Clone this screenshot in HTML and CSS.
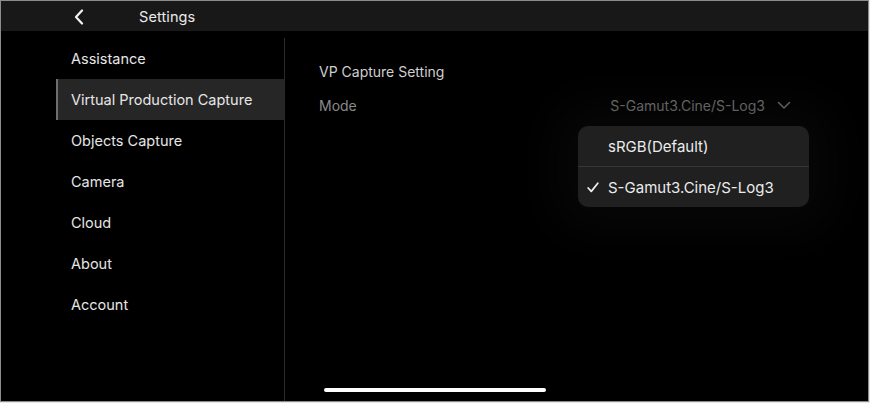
FILE: index.html
```html
<!DOCTYPE html>
<html>
<head>
<meta charset="utf-8">
<link rel="stylesheet" href="styles.css">
</head>
<body>
<div class="frame">
  <header class="topbar">
    <svg class="back" width="12" height="16" viewBox="0 0 12 16"><path d="M9 1.5 L3 8 L9 14.5" fill="none" stroke="#f2f2f2" stroke-width="2.2" stroke-linecap="round" stroke-linejoin="round"/></svg>
    <span class="title">Settings</span>
  </header>
  <div class="main">
    <nav class="sidebar">
      <div class="item">Assistance</div>
      <div class="item active">Virtual Production Capture</div>
      <div class="item">Objects Capture</div>
      <div class="item">Camera</div>
      <div class="item">Cloud</div>
      <div class="item">About</div>
      <div class="item">Account</div>
    </nav>
    <section class="content">
      <div class="section-title">VP Capture Setting</div>
      <div class="row">
        <span class="label">Mode</span>
        <span class="value">S-Gamut3.Cine/S-Log3
          <svg class="chev" width="14" height="9" viewBox="0 0 14 9"><path d="M1.5 1.5 L7 7 L12.5 1.5" fill="none" stroke="#7a7a7a" stroke-width="1.5" stroke-linecap="round" stroke-linejoin="round"/></svg>
        </span>
        <div class="menu">
          <div class="opt"><span class="check"></span>sRGB(Default)</div>
          <div class="opt"><span class="check"><svg width="12" height="11" viewBox="0 0 12 11"><path d="M1.2 6 L4.3 9.4 L10.8 1.2" fill="none" stroke="#f0f0f0" stroke-width="1.7" stroke-linecap="round" stroke-linejoin="round"/></svg></span>S-Gamut3.Cine/S-Log3</div>
        </div>
      </div>
      <div class="home"></div>
    </section>
  </div>
</div>
</body>
</html>
```
FILE: styles.css
```css
html, body { margin: 0; padding: 0; background: #e6e6e6; }
body { width: 870px; height: 403px; overflow: hidden; font-family: Inter, "Noto Sans", sans-serif; }
.frame {
  width: 867px; height: 400px;
  border: 1px solid #8c8c8c;
  background: #000;
  display: flex; flex-direction: column;
  overflow: hidden;
}
.topbar {
  height: 30px; flex: none;
  background: #181818;
  display: flex; align-items: center;
  color: #eaeaea; font-size: 14.5px;
}
.back { margin-left: 72px; margin-top: 1px; }
.title { margin-left: 54px; letter-spacing: 0.1px; }
.main { flex: 1; display: flex; position: relative; }
.sidebar {
  margin-left: 55px; margin-top: 7px;
  width: 228px; flex: none;
  border-right: 1px solid #2a2a2a;
}
.item {
  height: 41px; display: flex; align-items: center;
  padding-left: 15px;
  color: #e6e6e6; font-size: 14.5px;
}
.item.active { background: #262626; box-shadow: inset 2px 0 0 #6e6e6e; }
.content {
  flex: 1; position: relative;
  padding-left: 34px; padding-right: 77px;
}
.section-title { margin-top: 31px; color: #cfcfcf; font-size: 14px; height: 20px; line-height: 20px; }
.row { margin-top: 13px; display: flex; justify-content: space-between; align-items: center; height: 20px; position: relative; font-size: 14px; }
.label { color: #8a8a8a; }
.value { color: #808080; display: flex; align-items: center; }
.chev { margin-left: 12px; }
.menu {
  position: absolute; left: 259px; top: 31px;
  width: 231px; height: 81px;
  background: #202020; border-radius: 10px;
  box-shadow: 0 0 50px 25px rgba(16,16,16,0.45);
}
.opt {
  height: 40px; display: flex; align-items: center;
  color: #ececec; font-size: 15px;
}
.opt + .opt { border-top: 1px solid #353535; }
.check { width: 20px; margin-left: 9px; margin-right: 1px; display: flex; align-items: center; }
.home {
  position: absolute; left: 39px; bottom: 9px;
  width: 222px; height: 4px; border-radius: 2px; background: #fff;
}
```
